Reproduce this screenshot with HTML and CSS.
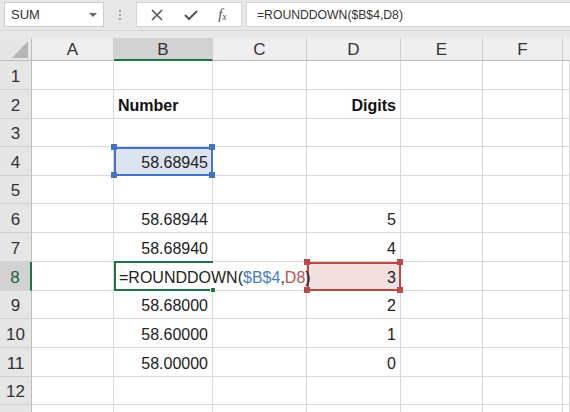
FILE: index.html
```html
<!DOCTYPE html>
<html>
<head>
<meta charset="utf-8">
<link rel="stylesheet" href="styles.css">
</head>
<body>
<div class="toolbar">
  <div class="namebox"><span>SUM</span><span class="caret"></span></div>
  <div class="dots"><i></i><i></i><i></i></div>
  <div class="buttons">
    <svg class="ico" width="12" height="12" viewBox="0 0 12 12"><path d="M1 1L11 11M11 1L1 11" stroke="#555" stroke-width="1.6" fill="none"/></svg>
    <svg class="ico" width="14" height="12" viewBox="0 0 14 12"><path d="M1 6L5 10L13 2" stroke="#555" stroke-width="2" fill="none"/></svg>
    <span class="fx">f<sub>x</sub></span>
  </div>
  <div class="formula">=ROUNDDOWN($B$4,D8)</div>
</div>
<div class="gapstrip"></div>
<div class="sheet">
  <div class="corner"><span class="tri"></span></div>
  <div class="ch">A</div><div class="ch sel">B</div><div class="ch">C</div><div class="ch">D</div><div class="ch">E</div><div class="ch">F</div><div class="ch last"></div>

  <div class="rh">1</div><div class="c"></div><div class="c"></div><div class="c"></div><div class="c"></div><div class="c"></div><div class="c"></div><div class="c"></div>
  <div class="rh">2</div><div class="c"></div><div class="c bold left">Number</div><div class="c"></div><div class="c bold">Digits</div><div class="c"></div><div class="c"></div><div class="c"></div>
  <div class="rh">3</div><div class="c"></div><div class="c"></div><div class="c"></div><div class="c"></div><div class="c"></div><div class="c"></div><div class="c"></div>
  <div class="rh">4</div><div class="c"></div><div class="c ref-blue">58.68945<i class="h tl"></i><i class="h tr"></i><i class="h bl"></i><i class="h br"></i></div><div class="c"></div><div class="c"></div><div class="c"></div><div class="c"></div><div class="c"></div>
  <div class="rh">5</div><div class="c"></div><div class="c"></div><div class="c"></div><div class="c"></div><div class="c"></div><div class="c"></div><div class="c"></div>
  <div class="rh">6</div><div class="c"></div><div class="c">58.68944</div><div class="c"></div><div class="c">5</div><div class="c"></div><div class="c"></div><div class="c"></div>
  <div class="rh">7</div><div class="c"></div><div class="c">58.68940</div><div class="c"></div><div class="c">4</div><div class="c"></div><div class="c"></div><div class="c"></div>
  <div class="rh sel">8</div><div class="c"></div><div class="c edit">=ROUNDDOWN(<span class="blue">$B$4</span>,<span class="red">D8</span>)<i class="fill"></i></div><div class="c"></div><div class="c ref-red">3<i class="h tl"></i><i class="h tr"></i><i class="h bl"></i><i class="h br"></i></div><div class="c"></div><div class="c"></div><div class="c"></div>
  <div class="rh">9</div><div class="c"></div><div class="c">58.68000</div><div class="c"></div><div class="c">2</div><div class="c"></div><div class="c"></div><div class="c"></div>
  <div class="rh">10</div><div class="c"></div><div class="c">58.60000</div><div class="c"></div><div class="c">1</div><div class="c"></div><div class="c"></div><div class="c"></div>
  <div class="rh">11</div><div class="c"></div><div class="c">58.00000</div><div class="c"></div><div class="c">0</div><div class="c"></div><div class="c"></div><div class="c"></div>
  <div class="rh">12</div><div class="c"></div><div class="c"></div><div class="c"></div><div class="c"></div><div class="c"></div><div class="c"></div><div class="c"></div>
  <div class="rh"></div><div class="c"></div><div class="c"></div><div class="c"></div><div class="c"></div><div class="c"></div><div class="c"></div><div class="c"></div>
</div>
</body>
</html>
```
FILE: styles.css
```css
* { box-sizing: border-box; }
html, body { margin: 0; padding: 0; }
body {
  width: 570px;
  height: 412px;
  overflow: hidden;
  background: #fff;
  font-family: "Liberation Sans", Arial, sans-serif;
  color: #222;
}
.toolbar {
  height: 31px;
  background: #e8e8e8;
  display: flex;
  align-items: flex-start;
  padding-top: 2px;
  padding-left: 4px;
  border-bottom: 1px solid #d6d6d6;
}
.namebox {
  width: 100px;
  height: 25px;
  background: #fff;
  border: 1px solid #cfcfcf;
  display: flex;
  align-items: center;
  justify-content: space-between;
  padding: 0 6px 0 6px;
  font-size: 13px;
  color: #333;
}
.caret {
  width: 0; height: 0;
  border-left: 4px solid transparent;
  border-right: 4px solid transparent;
  border-top: 4px solid #666;
}
.dots {
  width: 32px;
  height: 25px;
  display: flex;
  flex-direction: column;
  align-items: center;
  justify-content: center;
  gap: 2px;
}
.dots i { width: 2px; height: 2px; background: #a0a0a0; display: block; }
.buttons {
  width: 106px;
  height: 25px;
  background: #fff;
  border: 1px solid #d6d6d6;
  display: flex;
  align-items: center;
  justify-content: space-around;
  padding: 0 4px;
}
.fx {
  font-family: "Liberation Serif", serif;
  font-style: italic;
  font-size: 15px;
  color: #555;
}
.fx sub { font-size: 10px; vertical-align: -1px; }
.formula {
  flex: 1;
  height: 25px;
  margin-left: 4px;
  background: #fff;
  border: 1px solid #d6d6d6;
  border-right: none;
  display: flex;
  align-items: center;
  padding-left: 10px;
  font-size: 12.2px;
  color: #333;
}
.gapstrip { height: 7px; background: #e8e8e8; }
.sheet {
  display: grid;
  grid-template-columns: 32px 82px 99px 94px 94px 82px 80px 1fr;
  grid-template-rows: 23px 29px 29px 28px 29px 28px 29px 29px 29px 28px 29px 29px 28px 10px;
  font-size: 16px;
}
.corner {
  background: #e6e6e6;
  border-right: 1px solid #bdbdbd;
  border-bottom: 1px solid #bdbdbd;
  position: relative;
}
.tri {
  position: absolute;
  right: 3px;
  bottom: 2px;
  width: 0; height: 0;
  border-left: 16px solid transparent;
  border-bottom: 17px solid #b5b5b5;
}
.ch {
  background: #efefef;
  border-bottom: 1px solid #bdbdbd;
  border-right: 1px solid #cfcfcf;
  display: flex;
  align-items: center;
  justify-content: center;
  padding-top: 2px;
  font-size: 17px;
  color: #333;
}
.ch.last { border-right: none; }
.ch.sel {
  background: #d2d2d2;
  border-bottom: 2px solid #217346;
}
.rh {
  background: #e6e6e6;
  border-right: 1px solid #bdbdbd;
  border-bottom: 1px solid #d0d0d0;
  display: flex;
  align-items: center;
  justify-content: center;
  padding-top: 3px;
  font-size: 17px;
  color: #333;
}
.rh.sel {
  background: #d2d2d2;
  border-right: 2px solid #217346;
  color: #1e5e3b;
}
.c {
  border-right: 1px solid #d9d9d9;
  border-bottom: 1px solid #d9d9d9;
  display: flex;
  align-items: center;
  justify-content: flex-end;
  padding-right: 4px;
  padding-top: 3px;
  white-space: nowrap;
  position: relative;
}
.c.left { justify-content: flex-start; padding-left: 4px; }
.bold { font-weight: bold; color: #111; }
.ref-blue {
  background: #dbe4f0;
  outline: 2px solid #4472c4;
  outline-offset: -2px;
  z-index: 2;
}
.ref-red {
  background: #f3e0e0;
  outline: 2px solid #b84a48;
  outline-offset: -2px;
  z-index: 2;
}
.ref-blue .h { background: #4472c4; }
.ref-red .h { background: #b84a48; }
.h {
  position: absolute;
  width: 6px;
  height: 6px;
}
.h.tl { left: -3px; top: -3px; }
.h.tr { right: -3px; top: -3px; }
.h.bl { left: -3px; bottom: -3px; }
.h.br { right: -3px; bottom: -3px; }
.edit {
  justify-content: flex-start;
  padding-left: 3px;
  overflow: visible;
  border-left: 2px solid #217346;
  border-top: 2px solid #217346;
  border-bottom: 2px solid #217346;
  border-right: none;
  margin-top: -1px;
  z-index: 3;
  color: #222;
}
.edit .blue { color: #4a7cc4; }
.edit .red { color: #c0504d; }
.fill {
  position: absolute;
  right: -3px;
  bottom: -4px;
  width: 6px;
  height: 6px;
  background: #217346;
  border: 1px solid #fff;
}
```
